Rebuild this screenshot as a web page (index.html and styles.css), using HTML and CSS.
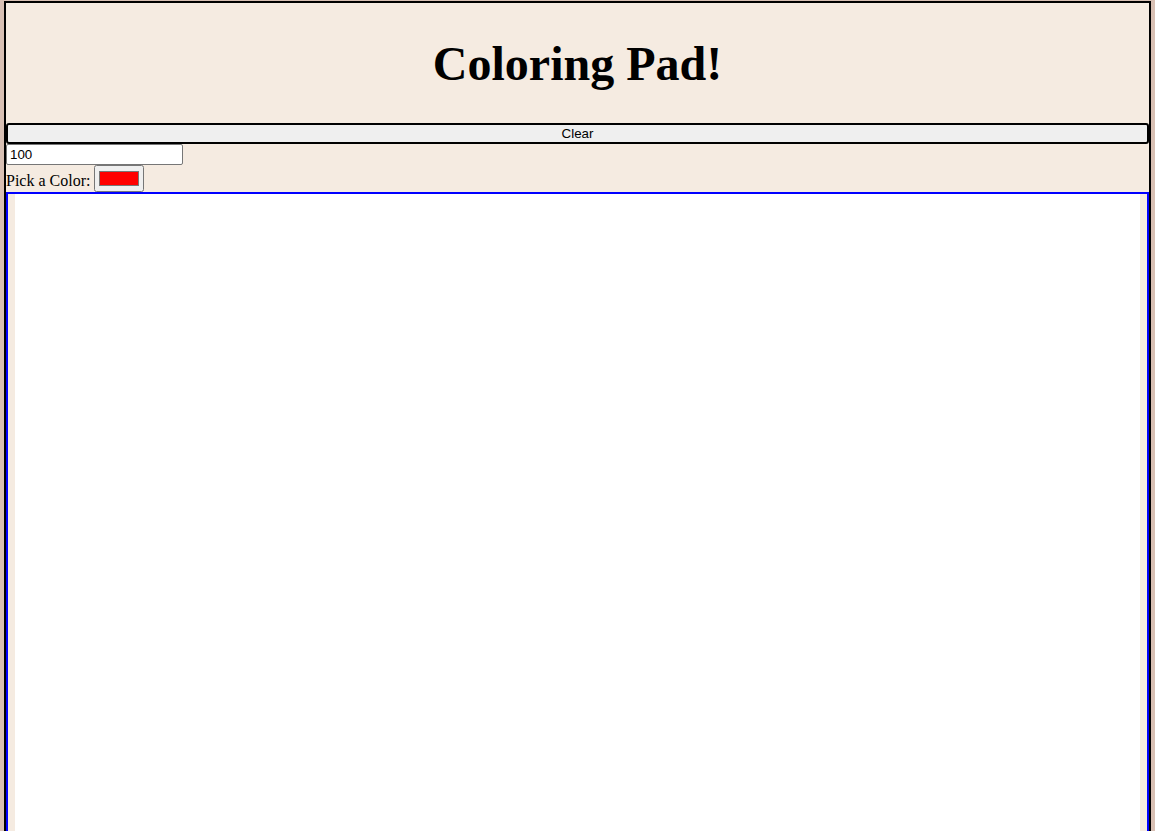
FILE: index.html
```html
<!DOCTYPE html>
<html lang="en">
<head>
<meta charset="utf-8">
<title>Coloring Pad!</title>
<link rel="stylesheet" href="styles.css">
</head>
<body>
  <header class="header">
    <h1 class="title">Coloring Pad!</h1>
  </header>
  <button class="clear-btn" type="button">Clear</button>
  <input class="size-input" type="text" value="100">
  <div class="color-row">
    <label class="color-label" for="picker">Pick a Color:</label>
    <input class="color-input" id="picker" type="color" value="#ff0000">
  </div>
  <div class="pad-frame">
    <canvas class="pad" width="1125" height="700"></canvas>
  </div>
</body>
</html>
```

FILE: styles.css
```css
html {
  background: #d8c0b4;
  overflow: hidden;
}

body {
  margin: 1px 4px 0 4px;
  border: 2px solid #000;
  background: #f5ebe1;
  font-family: "Liberation Serif", "Times New Roman", serif;
  font-size: 16px;
  color: #000;
}

.header {
  display: flex;
  justify-content: center;
}

.title {
  margin: 33px 0 32px;
  font-size: 48px;
  font-weight: bold;
  line-height: normal;
}

.clear-btn {
  display: block;
  width: 100%;
  box-sizing: border-box;
  margin: 0;
  padding: 1px 6px;
  border: 2px solid #000;
  border-radius: 3px;
  background: #efefef;
  font-family: "Liberation Sans", Arial, sans-serif;
  font-size: 13.3333px;
  color: #000;
}

.size-input {
  display: block;
  box-sizing: border-box;
  width: 177px;
  height: 21px;
  margin: 0;
  padding: 1px 3px;
  border: 1px solid #767676;
  border-radius: 2px;
  background: #fff;
  font-family: "Liberation Sans", Arial, sans-serif;
  font-size: 13.3333px;
  color: #000;
}

.color-row {
  display: flex;
  align-items: center;
  gap: 4px;
  height: 27px;
}

.color-label {
  padding-top: 4px;
}

.color-input {
  box-sizing: border-box;
  width: 50px;
  height: 27px;
  margin: 0;
  padding: 1px 2px;
}

.pad-frame {
  border: 2px solid #0000ff;
  background: #f5ebe1;
}

.pad {
  display: block;
  margin: 0 auto;
  background: #fff;
}
```
